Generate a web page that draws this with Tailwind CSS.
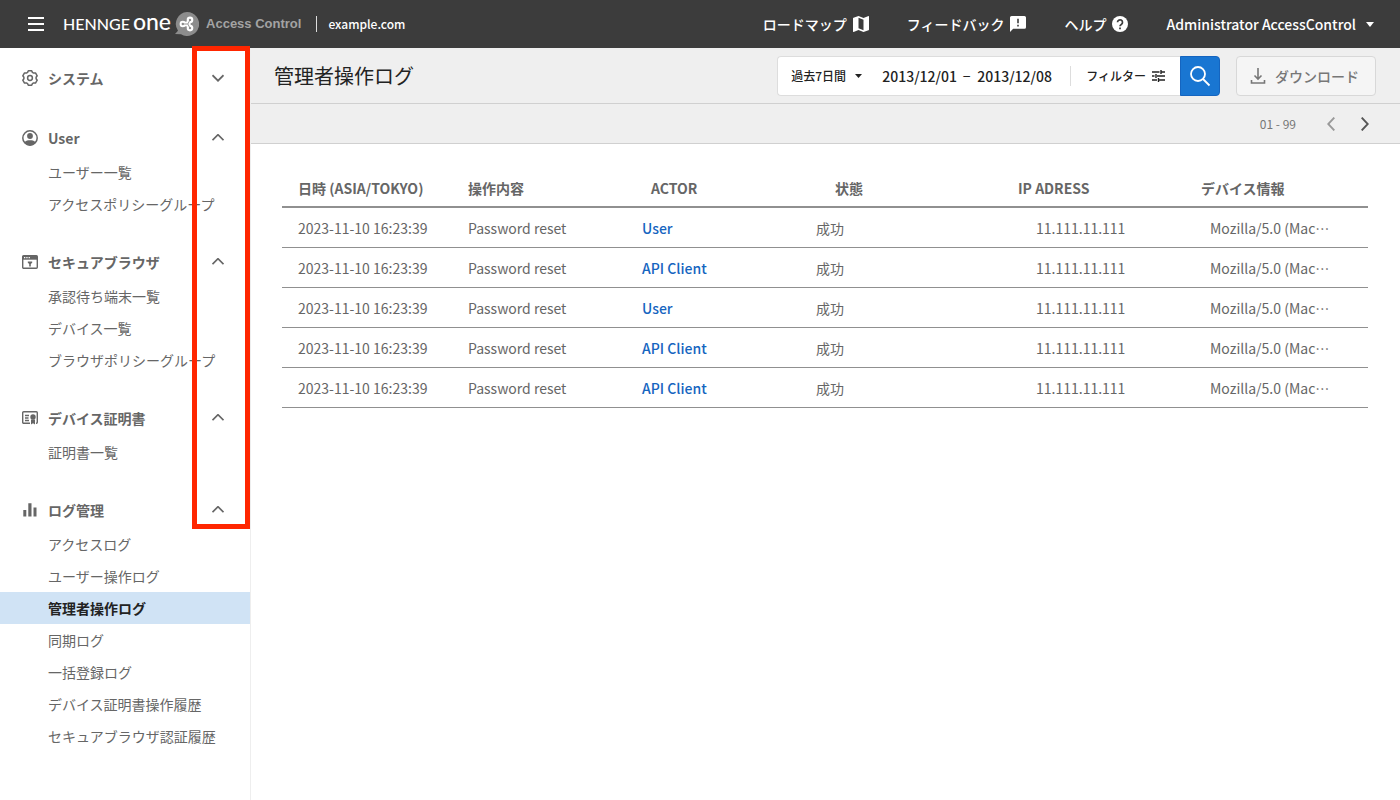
<!DOCTYPE html>
<html lang="ja">
<head>
    <meta charset="UTF-8">
    <meta name="viewport" content="width=device-width, initial-scale=1.0">
    <title>管理者操作ログ</title>
    <script src="https://cdn.jsdelivr.net/npm/@tailwindcss/browser@4"></script>
    <style>
        body {
            font-family: 'Noto Sans CJK JP', sans-serif;
        }
    </style>
</head>
<body class="relative flex flex-col min-h-screen bg-white text-sm text-[#666]">
    <!-- Top bar -->
    <header class="flex items-center h-12 pl-7 pr-[26px] bg-[#3c3c3c] text-white font-medium">
        <button type="button" aria-label="メニュー">
            <svg class="w-4 h-4" viewBox="0 0 16 16" stroke="currentColor" stroke-width="2"><path d="M0 2h16M0 8h16M0 14h16"/></svg>
        </button>
        <a href="#" class="flex items-center ml-[19px]">
            <span class="flex items-baseline gap-[3px] pb-1 font-['Lato'] leading-6"><span class="text-base">HENNGE</span><span class="text-[23px]">one</span></span>
            <svg class="w-6 h-6 ml-1" viewBox="0 0 24 24">
                <path d="M12 0a12 12 0 1 1-6 22.3L0 22l3-3.200A12 12 0 0 1 12 0z" fill="#8c8c8c"/>
                <g fill="#fff" stroke="#fff">
                    <path d="M7.800 12H13M15 7.800L12.800 12l2.200 4" fill="none" stroke-width="4.600" stroke-linejoin="round"/>
                    <circle cx="7.800" cy="12" r="3.200" stroke="none"/><circle cx="15" cy="7.900" r="3.300" stroke="none"/><circle cx="15" cy="16.100" r="3.300" stroke="none"/>
                </g>
                <g fill="#8c8c8c" stroke="#8c8c8c">
                    <path d="M7.800 12H12.800M15 7.900L12.800 12l2.200 4.100" fill="none" stroke-width=".900"/>
                    <circle cx="7.800" cy="12" r="1.200" stroke="none"/><circle cx="15" cy="7.900" r="1.200" stroke="none"/><circle cx="15" cy="16.100" r="1.200" stroke="none"/>
                </g>
            </svg>
            <span class="ml-[7px] font-['Liberation_Sans'] text-[13px] font-bold text-[#a3a3a3]">Access Control</span>
        </a>
        <span class="w-px h-4 ml-[15px] bg-[#ddd]"></span>
        <span class="ml-[11px] text-xs">example.com</span>
        <nav class="flex items-center gap-[38px] ml-auto">
            <a href="#" class="flex items-center gap-1.5">ロードマップ
                <svg class="w-4 h-4" viewBox="0 0 16 16" fill="currentColor"><path fill-rule="evenodd" d="M15.500 0L10.500 1.900 5.500 0 .500 1.700Q0 1.900 0 2.400v13.100q0 .500.600.400l4.900-1.800 5 1.900 5-1.700q.500-.200.500-.700V.500q0-.500-.500-.500zM10.500 14.200l-5-1.900V1.800l5 1.900z"/></svg>
            </a>
            <a href="#" class="flex items-center gap-1.5">フィードバック
                <svg class="w-4 h-4" viewBox="0 0 16 16" fill="currentColor"><path fill-rule="evenodd" d="M14.400 0H1.600Q0 0 0 1.600V16l3.200-3.200h11.200q1.600 0 1.600-1.600V1.600Q16 0 14.400 0zM8.800 10.400H7.200V8.800h1.600zm0-3.200H7.200V2.800h1.600z"/></svg>
            </a>
            <a href="#" class="flex items-center gap-1.5">ヘルプ
                <svg class="w-4 h-4" viewBox="0 0 16 16"><circle cx="8" cy="8" r="8" fill="#fff"/><path d="M5.500 6.300a2.500 2.500 0 1 1 4 2C8.600 8.900 8 9.200 8 10.300" fill="none" stroke="#3c3c3c" stroke-width="1.700"/><path d="M7.100 11.500h1.800v1.800H7.100z" fill="#3c3c3c"/></svg>
            </a>
            <button type="button" class="flex items-center gap-2.5">Administrator AccessControl
                <svg class="w-2 h-[5px]" viewBox="0 0 8 5" fill="currentColor"><path d="M0 0h8L4 5z"/></svg>
            </button>
        </nav>
    </header>

    <div class="flex flex-1">
        <!-- Sidebar -->
        <aside class="flex flex-col gap-6 w-[251px] shrink-0 pt-3 border-r border-[#eee]">
            <section>
                <button type="button" class="flex items-center w-full h-9 pl-[22px] pr-[26px] font-bold">
                    <svg class="w-4 h-4 mr-2.5" viewBox="0 0 16 16" fill="none" stroke="currentColor" stroke-width="1.500" stroke-linejoin="round"><path d="M6.300.800h3.400l.700 1.600 1.200.700 1.900-.200 1.700 2.900L14.100 7.300v1.400l1.100 1.500-1.700 2.900-1.900-.200-1.200.700-.700 1.600H6.300l-.700-1.600-1.200-.700-1.900.200-1.700-2.900L1.900 8.700V7.300L.800 5.800l1.700-2.900 1.900.200 1.200-.700z"/><circle cx="8" cy="8" r="2.400"/></svg>
                    システム
                    <svg class="w-3 h-2 ml-auto" viewBox="0 0 12 8" fill="none" stroke="currentColor" stroke-width="1.700"><path d="M.500 1.200L6 6.700l5.500-5.500"/></svg>
                </button>
            </section>
            <section>
                <button type="button" class="flex items-center w-full h-9 pl-[22px] pr-[26px] font-bold">
                    <svg class="w-4 h-4 mr-2.5" viewBox="0 0 16 16"><circle cx="8" cy="8" r="7.200" fill="none" stroke="currentColor" stroke-width="1.500"/><circle cx="8" cy="6" r="2.900" fill="currentColor"/><path d="M2.300 12.200C4 10.600 6 10.300 8 10.300s4 .300 5.700 1.900A7.500 7.500 0 0 1 8 15.500a7.500 7.500 0 0 1-5.700-3.300z" fill="currentColor"/></svg>
                    User
                    <svg class="w-3 h-2 ml-auto" viewBox="0 0 12 8" fill="none" stroke="currentColor" stroke-width="1.700"><path d="M.500 6.200L6 .700l5.500 5.500"/></svg>
                </button>
                <ul class="leading-8">
                    <li><a href="#" class="block pl-12">ユーザー一覧</a></li>
                    <li><a href="#" class="block pl-12">アクセスポリシーグループ</a></li>
                </ul>
            </section>
            <section>
                <button type="button" class="flex items-center w-full h-9 pl-[22px] pr-[26px] font-bold">
                    <svg class="w-4 h-4 mr-2.5" viewBox="0 0 16 16"><rect x=".700" y="1.700" width="14.600" height="12.600" rx="1" fill="none" stroke="currentColor" stroke-width="1.400"/><path d="M.700 1.700h14.600v4H.700z" fill="currentColor"/><path d="M2 3h1.300v1.200H2zM4.300 3h1.300v1.200H4.300zM6.600 3h1.300v1.200H6.600z" fill="#fff"/><path d="M5.800 7.500h4.400v1.300L8.800 10v2.500H7.200V10L5.800 8.800z" fill="currentColor"/></svg>
                    セキュアブラウザ
                    <svg class="w-3 h-2 ml-auto" viewBox="0 0 12 8" fill="none" stroke="currentColor" stroke-width="1.700"><path d="M.500 6.200L6 .700l5.500 5.500"/></svg>
                </button>
                <ul class="leading-8">
                    <li><a href="#" class="block pl-12">承認待ち端末一覧</a></li>
                    <li><a href="#" class="block pl-12">デバイス一覧</a></li>
                    <li><a href="#" class="block pl-12">ブラウザポリシーグループ</a></li>
                </ul>
            </section>
            <section>
                <button type="button" class="flex items-center w-full h-9 pl-[22px] pr-[26px] font-bold">
                    <svg class="w-4 h-4 mr-2.5" viewBox="0 0 16 16"><path d="M8 13.300H1.700a1 1 0 0 1-1-1V2.700a1 1 0 0 1 1-1h12.600a1 1 0 0 1 1 1v9.600a1 1 0 0 1-1 1H14M3 5.500h4M3 8h3.500M3 10.500h4" fill="none" stroke="currentColor" stroke-width="1.400"/><circle cx="11" cy="7" r="2.700" fill="currentColor"/><path d="M9 9.500h4v5l-2-1.300-2 1.300z" fill="currentColor"/></svg>
                    デバイス証明書
                    <svg class="w-3 h-2 ml-auto" viewBox="0 0 12 8" fill="none" stroke="currentColor" stroke-width="1.700"><path d="M.500 6.200L6 .700l5.500 5.500"/></svg>
                </button>
                <ul class="leading-8">
                    <li><a href="#" class="block pl-12">証明書一覧</a></li>
                </ul>
            </section>
            <section>
                <button type="button" class="flex items-center w-full h-9 pl-[22px] pr-[26px] font-bold">
                    <svg class="w-4 h-4 mr-2.5" viewBox="0 0 16 16" fill="currentColor"><path d="M1.300 8h3v6.500h-3zM6.300 1.300h3.200v13.200H6.300zM11.500 5.500h3v9h-3z"/></svg>
                    ログ管理
                    <svg class="w-3 h-2 ml-auto" viewBox="0 0 12 8" fill="none" stroke="currentColor" stroke-width="1.700"><path d="M.500 6.200L6 .700l5.500 5.500"/></svg>
                </button>
                <ul class="leading-8">
                    <li><a href="#" class="block pl-12">アクセスログ</a></li>
                    <li><a href="#" class="block pl-12">ユーザー操作ログ</a></li>
                    <li><a href="#" class="block pl-12 bg-[#d0e3f5] font-bold text-[#222]" aria-current="page">管理者操作ログ</a></li>
                    <li><a href="#" class="block pl-12">同期ログ</a></li>
                    <li><a href="#" class="block pl-12">一括登録ログ</a></li>
                    <li><a href="#" class="block pl-12">デバイス証明書操作履歴</a></li>
                    <li><a href="#" class="block pl-12">セキュアブラウザ認証履歴</a></li>
                </ul>
            </section>
        </aside>

        <main class="flex-1 min-w-0">
            <div class="flex items-center h-14 pl-[23px] pr-6 bg-[#efefef] border-b border-[#d0d0d0]">
                <h1 class="text-xl text-[#222]">管理者操作ログ</h1>
                <form class="flex items-center h-10 ml-auto bg-white border border-r-0 border-[#ddd] rounded font-medium text-[#222]">
                    <label class="relative flex items-center ml-[13px]">
                        <select class="appearance-none w-[71px] text-xs" aria-label="期間">
                            <option>過去7日間</option>
                        </select>
                        <svg class="absolute right-0 w-[7px] h-1 pointer-events-none" viewBox="0 0 7 4" fill="currentColor"><path d="M0 0h7L3.500 4z"/></svg>
                    </label>
                    <input type="text" class="w-[76px] ml-5" value="2013/12/01" aria-label="開始日">
                    <span class="w-[19px] pr-0.5 text-center font-normal">−</span>
                    <input type="text" class="w-[76px]" value="2013/12/08" aria-label="終了日">
                    <span class="w-px h-5 ml-[17px] bg-[#ddd]"></span>
                    <button type="button" class="flex items-center gap-1.5 mx-[15px] text-xs">フィルター
                        <svg class="w-[13px] h-3" viewBox="0 0 13 12" fill="none" stroke="currentColor" stroke-width="1.400"><path d="M0 2h7.500M9.500 2H13M9 0v4M0 6h2.500M5 6h8M4 4v4M0 10h5M7 10h6M6.500 8v4"/></svg>
                    </button>
                    <button type="submit" class="flex items-center justify-center w-10 h-10 bg-[#1976d2] border border-[#1565c0] rounded-r text-white" aria-label="検索">
                        <svg class="w-6 h-6" viewBox="0 0 24 24" fill="none" stroke="currentColor" stroke-width="1.800"><circle cx="10" cy="10" r="7"/><path d="M15 15l6.500 6.500"/></svg>
                    </button>
                </form>
                <button type="button" class="flex items-center gap-[9px] w-[140px] h-10 ml-4 pl-[13px] bg-[#f5f5f5] border border-[#d8d8d8] rounded font-medium text-[#777]">
                    <svg class="w-4 h-4" viewBox="0 0 16 16" fill="none" stroke="currentColor" stroke-width="1.600"><path d="M8 0v11M4.500 7.500L8 11l3.500-3.500M1.500 12v3h13v-3"/></svg>
                    ダウンロード
                </button>
            </div>
            <div class="flex items-center justify-end h-10 pr-[31px] bg-[#efefef] border-b border-[#d0d0d0]">
                <span class="text-xs text-[#777]">01 - 99</span>
                <button type="button" class="ml-[31px] text-[#999]" aria-label="前へ">
                    <svg class="w-2 h-3.5" viewBox="0 0 8 14" fill="none" stroke="currentColor" stroke-width="1.900"><path d="M7.300.600L1.200 7l6.100 6.400"/></svg>
                </button>
                <button type="button" class="ml-[26px] text-[#555]" aria-label="次へ">
                    <svg class="w-2 h-3.5" viewBox="0 0 8 14" fill="none" stroke="currentColor" stroke-width="1.900"><path d="M.700.600L6.800 7l-6.100 6.400"/></svg>
                </button>
            </div>

            <div class="pt-[25px] pl-[31px] pr-8">
                <table class="w-full table-fixed text-left whitespace-nowrap">
                    <colgroup>
                        <col class="w-[170px]"><col class="w-[174px]"><col class="w-[174px]"><col class="w-[210px]"><col class="w-[184px]"><col class="w-[174px]">
                    </colgroup>
                    <thead>
                        <tr class="h-[38px] border-b-2 border-[#909090]">
                            <th class="pl-4 font-bold">日時 (ASIA/TOKYO)</th>
                            <th class="pl-4 font-bold">操作内容</th>
                            <th class="pl-[25px] font-bold">ACTOR</th>
                            <th class="pl-[35px] font-bold">状態</th>
                            <th class="pl-2 font-bold">IP ADRESS</th>
                            <th class="pl-[7px] font-bold">デバイス情報</th>
                        </tr>
                    </thead>
                    <tbody class="[&_td]:pt-0.5">
                        <tr class="h-10 border-b border-[#909090]">
                            <td class="pl-4">2023-11-10 16:23:39</td>
                            <td class="pl-4">Password reset</td>
                            <td class="pl-4"><a href="#" class="font-medium text-[#1565c0]">User</a></td>
                            <td class="pl-4">成功</td>
                            <td class="pl-[26px]">11.111.11.111</td>
                            <td class="pl-4">Mozilla/5.0 (Mac…</td>
                        </tr>
                        <tr class="h-10 border-b border-[#909090]">
                            <td class="pl-4">2023-11-10 16:23:39</td>
                            <td class="pl-4">Password reset</td>
                            <td class="pl-4"><a href="#" class="font-medium text-[#1565c0]">API Client</a></td>
                            <td class="pl-4">成功</td>
                            <td class="pl-[26px]">11.111.11.111</td>
                            <td class="pl-4">Mozilla/5.0 (Mac…</td>
                        </tr>
                        <tr class="h-10 border-b border-[#909090]">
                            <td class="pl-4">2023-11-10 16:23:39</td>
                            <td class="pl-4">Password reset</td>
                            <td class="pl-4"><a href="#" class="font-medium text-[#1565c0]">User</a></td>
                            <td class="pl-4">成功</td>
                            <td class="pl-[26px]">11.111.11.111</td>
                            <td class="pl-4">Mozilla/5.0 (Mac…</td>
                        </tr>
                        <tr class="h-10 border-b border-[#909090]">
                            <td class="pl-4">2023-11-10 16:23:39</td>
                            <td class="pl-4">Password reset</td>
                            <td class="pl-4"><a href="#" class="font-medium text-[#1565c0]">API Client</a></td>
                            <td class="pl-4">成功</td>
                            <td class="pl-[26px]">11.111.11.111</td>
                            <td class="pl-4">Mozilla/5.0 (Mac…</td>
                        </tr>
                        <tr class="h-10 border-b border-[#909090]">
                            <td class="pl-4">2023-11-10 16:23:39</td>
                            <td class="pl-4">Password reset</td>
                            <td class="pl-4"><a href="#" class="font-medium text-[#1565c0]">API Client</a></td>
                            <td class="pl-4">成功</td>
                            <td class="pl-[26px]">11.111.11.111</td>
                            <td class="pl-4">Mozilla/5.0 (Mac…</td>
                        </tr>
                    </tbody>
                </table>
            </div>
        </main>
    </div>

    <!-- Highlight around the section toggles -->
    <div class="absolute left-[192px] top-[46px] w-[58px] h-[483px] border-5 border-[#ff2600] pointer-events-none"></div>
</body>
</html>
